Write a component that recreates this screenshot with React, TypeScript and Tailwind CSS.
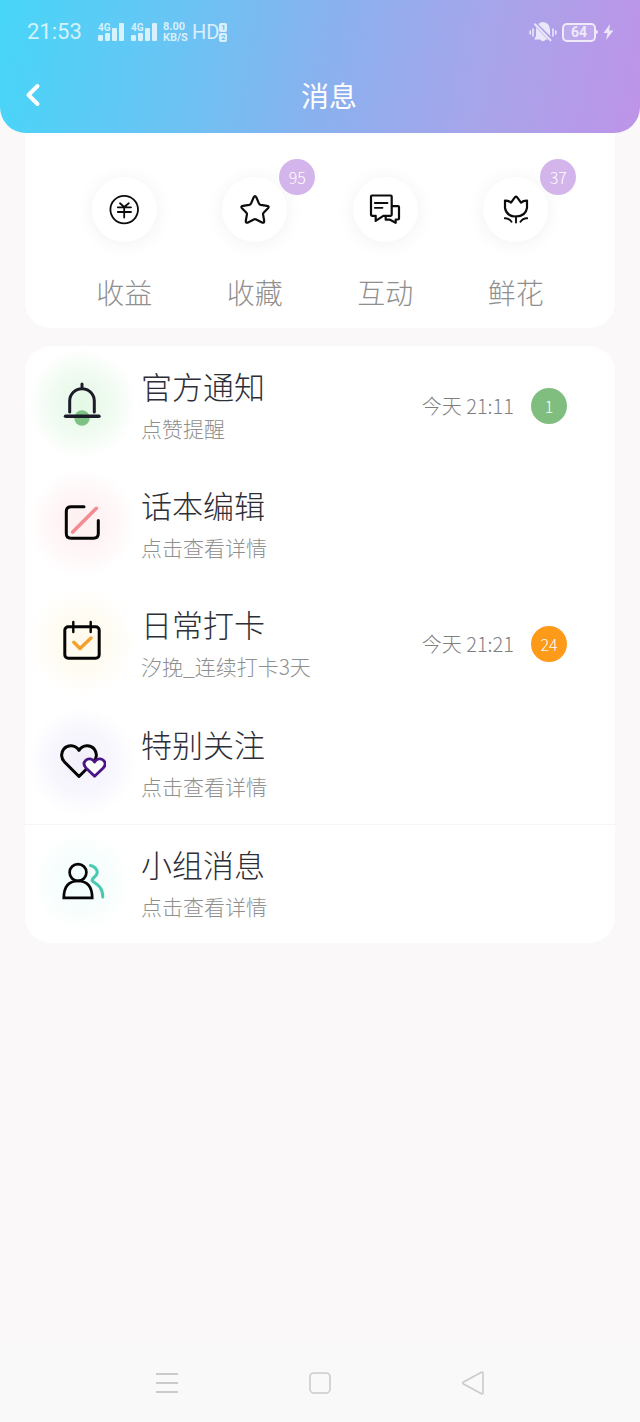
import type { ReactNode } from "react";

interface Shortcut {
  label: string;
  badge?: number;
  icon: ReactNode;
}

interface MessageItem {
  title: string;
  subtitle: string;
  time?: string;
  count?: number;
  countColor?: string;
  glow: string;
  divider?: boolean;
  icon: ReactNode;
}

const shortcuts: Shortcut[] = [
  {
    label: "收益",
    icon: (
      <g strokeWidth="1.8">
        <circle cx="16.2" cy="15.6" r="13.8" />
        <path d="M12 9.3L16.2 13L20.8 9.3M16.2 13V23.5M9.8 13.3H23M9.8 18H23" />
      </g>
    ),
  },
  {
    label: "收藏",
    badge: 95,
    icon: (
      <path d="M14.7 3.3Q16 1.1 17.3 3.3L20 9.6Q20.5 10.6 21.6 10.8L28 11.8Q30.6 12.4 29 14.3L24.6 18.8Q23.9 19.6 24.1 20.6L25.2 26.9Q25.4 29.4 23 28.4L17.2 25.4Q16 24.8 14.8 25.4L9 28.4Q6.6 29.4 6.8 26.9L7.9 20.6Q8.1 19.6 7.4 18.8L3 14.3Q1.4 12.4 4 11.8L10.4 10.8Q11.5 10.6 12 9.6Z" />
    ),
  },
  {
    label: "互动",
    icon: (
      <>
        <path d="M3 1.5H21.6Q22.7 1.5 22.7 2.5V20.8Q22.7 21.8 21.6 21.8H14.3L6.7 26.8V21.8H3Q2 21.8 2 20.8V2.5Q2 1.5 3 1.5Z" />
        <path d="M5.8 9H18.5M5.8 13.8H13.5" strokeWidth="1.8" />
        <path d="M23.3 12.2H29Q30 12.2 30 13.2V24.5Q30 25.5 29 25.5H26.7V28.8L21 25.7H16.7V23" />
      </>
    ),
  },
  {
    label: "鲜花",
    badge: 37,
    icon: (
      <>
        <path d="M5 6.6Q8.5 6.4 11 8.6L15 3.2Q16 2 17 3.2L21 8.6Q23.5 6.4 27 6.6V14Q25.5 22.5 16 22.5Q6.500 22.5 5 14Z" />
        <path d="M16 22.5V28.5M4.8 24.2Q9 24 11.5 27.8M27.2 24.2Q23 24 20.5 27.8" strokeWidth="1.9" />
      </>
    ),
  },
];

const messages: MessageItem[] = [
  {
    title: "官方通知",
    subtitle: "点赞提醒",
    time: "今天 21:11",
    count: 1,
    countColor: "bg-[#80be80]",
    glow: "bg-radial from-[#e4f8e5] via-[#f0fbf1] via-40% to-white to-72%",
    icon: (
      <>
        <circle cx="24" cy="38" r="7.7" fill="#7dc183" stroke="none" />
        <path d="M11.7 32V21a12.3 12.3 0 0 1 24.6 0V32M24 4V8.5" stroke="#1c1c28" />
        <path d="M7.5 36.3H41" stroke="#1c1c28" strokeWidth="3.4" />
      </>
    ),
  },
  {
    title: "话本编辑",
    subtitle: "点击查看详情",
    glow: "bg-radial from-[#ffeff0] via-[#fff6f7] via-40% to-white to-72%",
    icon: (
      <>
        <path d="M26 7.8H13Q8.3 7.8 8.3 12.5V34.5Q8.3 39.2 13 39.2H35.5Q40.3 39.2 40.3 34.5V21.5" />
        <path d="M38.3 9.3L14.7 33" stroke="#f38b90" strokeWidth="3.6" />
      </>
    ),
  },
  {
    title: "日常打卡",
    subtitle: "汐挽_连续打卡3天",
    time: "今天 21:21",
    count: 24,
    countColor: "bg-[#fd9a17]",
    glow: "bg-radial from-[#fffaeb] via-[#fffcf4] via-40% to-white to-72%",
    icon: (
      <>
        <rect x="6.8" y="8.8" width="34.4" height="31.4" rx="3.5" />
        <path d="M15.3 4V14M32.7 4V14" strokeWidth="2.4" />
        <path d="M15.8 24.3L22 30.5L33 20" stroke="#f5a02a" strokeWidth="3.4" />
      </>
    ),
  },
  {
    title: "特别关注",
    subtitle: "点击查看详情",
    glow: "bg-radial from-[#f2effb] via-[#f8f6fd] via-40% to-white to-72%",
    icon: (
      <>
        <path d="M21 38.5L6.500 24C3 20.5 2.6 15 5.8 11C9.5 6.600 17 6.400 21 12.3C25 6.4 32.500 6.6 36.2 11C39.4 15 39 20.5 35.5 24Z" />
        <path
          d="M36.6 38.2L28 30C25.6 27.400 25.6 24.400 27.6 22.4C30.2 19.9 34.5 20.3 36.6 24.1C38.7 20.3 43 19.9 45.6 22.4C47.6 24.4 47.6 27.4 45.2 30Z"
          fill="white"
          stroke="#4a1486"
          strokeWidth="2.8"
        />
      </>
    ),
  },
  {
    title: "小组消息",
    subtitle: "点击查看详情",
    divider: true,
    glow: "bg-radial from-[#f0fdfb] via-[#f8fefd] via-40% to-white to-65%",
    icon: (
      <>
        <circle cx="20" cy="14.5" r="8.4" strokeWidth="2.7" />
        <path d="M5.8 39.9Q5.8 23 20 23Q34.2 23 34.2 39.9Z" strokeWidth="2.7" strokeLinejoin="miter" />
        <path
          d="M32.5 7.5C36 8 39.8 11.5 39.2 15C38.5 19 34 19.500 34 22.5C36 25.500 44.8 27 44.8 39"
          stroke="#48c9b0"
        />
      </>
    ),
  },
];

const Signal = () => (
  <svg width="28" height="20" viewBox="0 0 28 20" fill="currentColor" aria-hidden="true">
    <text x="0" y="9" fontSize="10" fontWeight="700">
      4G
    </text>
    <rect x="0" y="13" width="5" height="6" rx="1" />
    <rect x="7" y="11" width="5" height="8" rx="1" />
    <rect x="14" y="6" width="5" height="13" rx="1" />
    <rect x="21" y="1" width="5" height="18" rx="1" />
  </svg>
);

const StatusBar = () => (
  <div className="flex h-16 items-center justify-between pl-[27px] pr-[26px] font-[Roboto,sans-serif] font-normal text-white/75">
    <div className="flex items-center">
      <span className="w-[71px] text-[22px] leading-6">21:53</span>
      <span className="flex gap-[5px]">
        <Signal />
        <Signal />
      </span>
      <span className="ml-1 flex w-[29px] flex-col text-[11px] font-bold leading-[11px]">
        <span>8.00</span>
        <span>KB/S</span>
      </span>
      <span className="text-[20px] leading-6">HD</span>
      <span className="flex flex-col gap-px text-center text-[8px] font-bold leading-[9px] text-[#69c4f2]">
        <span className="w-2 rounded-xs bg-white/75">1</span>
        <span className="w-2 rounded-xs bg-white/75">2</span>
      </span>
    </div>
    <div className="flex items-center gap-[5px]">
      <svg width="28" height="22" viewBox="0 0 28 22" fill="currentColor" aria-hidden="true">
        <path d="M9.3 3.2Q11 1 14 1Q20.5 1.5 21 8.5V13.5L22 15.800ZM7 6.5L18.8 18.5H17Q14 22 11 18.500H5.500V17.5L7 15Z" />
        <path d="M6 3.3L21.5 19.300" stroke="currentColor" strokeWidth="2" strokeLinecap="round" />
        <path
          d="M1.2 10V13M4 8V15M24 8V15M26.8 10V13"
          stroke="currentColor"
          strokeWidth="1.6"
          strokeLinecap="round"
        />
      </svg>
      <span className="flex items-center">
        <span className="flex h-[19px] w-[34px] items-center justify-center rounded-[5px] border-2 border-current bg-white/15 text-[14px] font-bold leading-4">
          64
        </span>
        <span className="h-1 w-0.5 rounded-r-sm bg-current" />
      </span>
      <svg width="11" height="16" viewBox="0 0 11 16" fill="currentColor" aria-hidden="true">
        <path d="M7 0L0.5 9H4.5L3 16L10.5 6.5H6.2Z" />
      </svg>
    </div>
  </div>
);

const Header = () => (
  <header className="rounded-b-[26px] bg-[linear-gradient(100deg,#47d6f8_0%,#6cc2f3_30%,#8bb0ee_52%,#a8a4ea_76%,#be94e8_100%)] pb-[7px]">
    <StatusBar />
    <div className="grid h-[62px] grid-cols-[64px_1fr_64px] items-center text-white">
      <button type="button" aria-label="返回" className="flex h-full items-center pl-6">
        <svg width="18" height="26" viewBox="0 0 18 26" fill="none" stroke="currentColor" strokeWidth="4">
          <path d="M13.5 4L4.5 13L13.5 22" strokeLinecap="round" strokeLinejoin="round" />
        </svg>
      </button>
      <h1 className="pl-[18px] text-center text-[28px] font-normal leading-9">消息</h1>
    </div>
  </header>
);

const ShortcutButton = ({ label, badge, icon }: Shortcut) => (
  <button type="button" className="flex flex-col items-center">
    <span className="relative flex size-[65px] items-center justify-center rounded-full bg-white shadow-[0_2px_20px_rgba(0,0,0,0.06)]">
      <svg
        width="32"
        height="32"
        viewBox="0 0 32 32"
        fill="none"
        stroke="#0c0c0c"
        strokeWidth="2.2"
        strokeLinecap="round"
        strokeLinejoin="round"
        aria-hidden="true"
      >
        {icon}
      </svg>
      {badge && (
        <span className="absolute -top-[18px] left-[57px] flex size-9 items-center justify-center rounded-full bg-[#d3b5eb] text-[16px] leading-5 text-white">
          {badge}
        </span>
      )}
    </span>
    <span className="mt-8 text-[28px] leading-9 text-[#8f8f8f]">{label}</span>
  </button>
);

const MessageRow = ({ title, subtitle, time, count, countColor, glow, divider, icon }: MessageItem) => (
  <li className={divider ? "border-t border-[#f7f5f6]" : ""}>
    <button type="button" className="flex h-full w-full items-center pl-[3px] pr-12 text-left">
      <span className={`mb-1 flex size-[108px] shrink-0 items-center justify-center rounded-full ${glow}`}>
        <svg
          width="48"
          height="48"
          viewBox="0 0 48 48"
          fill="none"
          stroke="#050505"
          strokeWidth="3"
          strokeLinecap="round"
          strokeLinejoin="round"
          aria-hidden="true"
        >
          {icon}
        </svg>
      </span>
      <span className="ml-[5px] flex min-w-0 flex-1 flex-col gap-3">
        <span className="text-[31px] leading-8 text-[#2e2e36]">{title}</span>
        <span className="text-[21px] leading-7 text-[#8f8f8f]">{subtitle}</span>
      </span>
      {time && <span className="text-[20px] leading-7 text-[#7f7f7f]">{time}</span>}
      {count && (
        <span
          className={`ml-[17px] flex size-9 items-center justify-center rounded-full text-[16px] leading-5 text-white ${countColor}`}
        >
          {count}
        </span>
      )}
    </button>
  </li>
);

const SystemNav = () => (
  <nav className="mt-auto grid h-[78px] grid-cols-3 bg-[#f9f9f9] px-[91px] text-[#cbcbcb]">
    <button type="button" aria-label="菜单" className="flex items-center justify-center">
      <svg width="24" height="24" viewBox="0 0 24 24" fill="none" stroke="currentColor" strokeWidth="1.8">
        <path d="M1 3H23M1 12H23M1 21H23" />
      </svg>
    </button>
    <button type="button" aria-label="主页" className="flex items-center justify-center">
      <svg width="24" height="24" viewBox="0 0 24 24" fill="none" stroke="currentColor" strokeWidth="1.6">
        <rect x="2" y="2" width="20" height="20" rx="4" />
      </svg>
    </button>
    <button type="button" aria-label="后退" className="flex items-center justify-center">
      <svg width="24" height="26" viewBox="0 0 24 26" fill="none" stroke="currentColor" strokeWidth="1.6">
        <path d="M20.5 2.3L2.5 12Q1 13 2.5 14L20.5 23.7Q22 24.3 22 22.7V3.3Q22 1.7 20.5 2.3Z" />
      </svg>
    </button>
  </nav>
);

const App = () => {
  return (
    <div className="flex min-h-screen flex-col bg-[#faf8f9] font-['Noto_Sans_CJK_SC',sans-serif] font-light">
      <Header />
      <main className="px-[25px]">
        <section className="grid grid-cols-4 rounded-b-[26px] bg-white px-[34px] pb-[18px] pt-11">
          {shortcuts.map((item) => (
            <ShortcutButton key={item.label} {...item} />
          ))}
        </section>

        <ul className="mt-[18px] grid min-h-[597px] auto-rows-fr overflow-hidden rounded-[26px] bg-white">
          {messages.map((item) => (
            <MessageRow key={item.title} {...item} />
          ))}
        </ul>
      </main>
      <SystemNav />
    </div>
  );
};

export default App;
